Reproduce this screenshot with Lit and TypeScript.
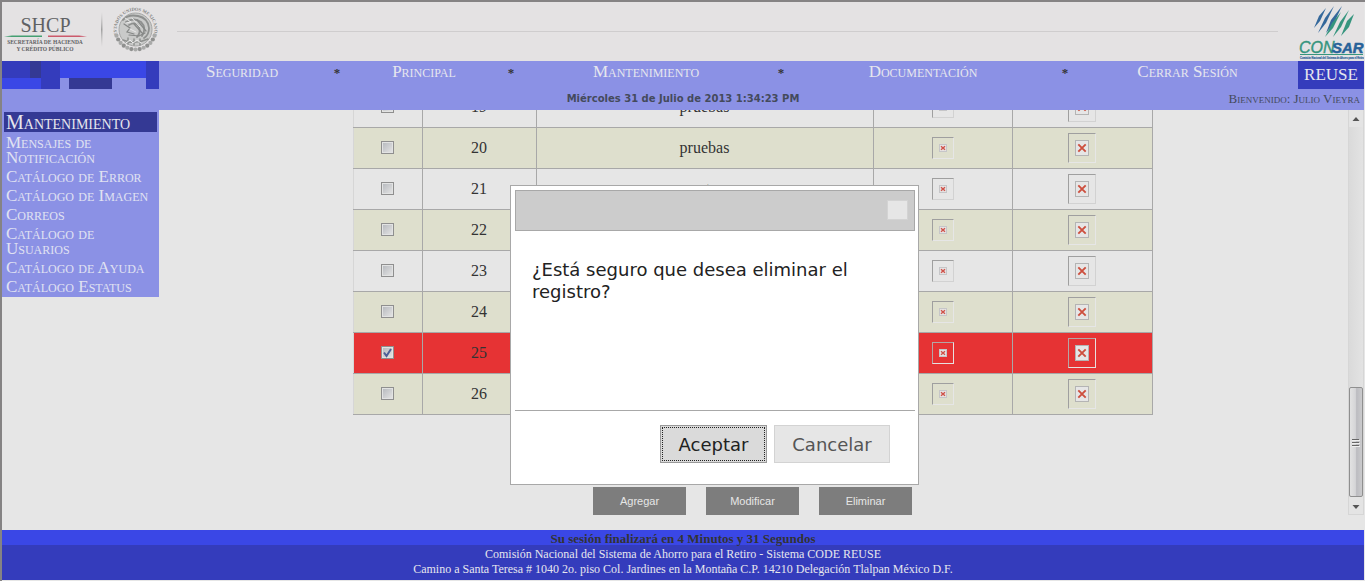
import { LitElement, html, css, svg } from "lit";
import { customElement, state } from "lit/decorators.js";
import { classMap } from "lit/directives/class-map.js";

interface Row {
  id: number;
  name: string;
}

const ROWS: Row[] = [
  { id: 19, name: "pruebas" },
  { id: 20, name: "pruebas" },
  { id: 21, name: "et" },
  { id: 22, name: "pruebas" },
  { id: 23, name: "pruebas" },
  { id: 24, name: "pruebas" },
  { id: 25, name: "pruebas" },
  { id: 26, name: "pruebas" },
];

const NAV = ["Seguridad", "Principal", "Mantenimiento", "Documentación", "Cerrar Sesión"];

const MENU = [
  "Mensajes de Notificación",
  "Catálogo de Error",
  "Catálogo de Imagen",
  "Correos",
  "Catálogo de Usuarios",
  "Catálogo de Ayuda",
  "Catálogo Estatus",
];

@customElement("brand-header")
class BrandHeader extends LitElement {
  static styles = css`
    :host {
      display: flex;
      align-items: flex-start;
      height: 59px;
      background: #e4e2e3;
    }
    svg {
      display: block;
      flex: none;
    }
    .rule {
      flex: 1;
      height: 1px;
      margin: 29px 20px 0 17px;
      background: #cfcdce;
    }
  `;

  private leaves() {
    return Array.from({ length: 13 }, (_, i) => {
      const a = ((i * 12 + 18) * Math.PI) / 180;
      return svg`<circle cx=${135.5 + Math.cos(a) * 20} cy=${29.5 + Math.sin(a) * 20} r="2.1"
        fill=${i % 2 ? "#8f908f" : "#a9aaa9"} />`;
    });
  }

  render() {
    return html`
      <svg width="158" height="59" viewBox="2 2 158 59" role="img" aria-label="SHCP Secretaría de Hacienda y Crédito Público">
        <defs>
          <linearGradient id="bar" x1="0" y1="0" x2="0" y2="1">
            <stop offset="0" stop-color="#b5b5b5" stop-opacity="0" />
            <stop offset=".5" stop-color="#a0a0a0" />
            <stop offset="1" stop-color="#b5b5b5" stop-opacity="0" />
          </linearGradient>
          <path id="arc" d="M117.500 35 A18.800 18.800 0 1 1 153.500 35" />
        </defs>
        <g font-family="'Liberation Serif', serif" text-anchor="middle" fill="#5f6163">
          <text x="45.500" y="32" font-size="20">SHCP</text>
          <text x="45" y="44" font-size="5.500" font-weight="bold">SECRETARÍA DE HACIENDA</text>
          <text x="45" y="50.500" font-size="5.500" font-weight="bold">Y CRÉDITO PÚBLICO</text>
        </g>
        <path d="M4 36.500 L12 35.400 H42 V37 H12 Z" fill="#459f72" />
        <path d="M48 35.400 H79 L87 36.500 L79 37 H48 Z" fill="#cb5a6c" />
        <rect x="101" y="12" width="1.500" height="35" fill="url(#bar)" />
        <circle cx="135.500" cy="29.500" r="16.500" fill="#c9cac9" stroke="#a6a7a6" />
        <text font-family="'Liberation Serif', serif" font-size="4.600" font-weight="bold" fill="#858685">
          <textPath href="#arc">ESTADOS UNIDOS MEXICANOS</textPath>
        </text>
        ${this.leaves()}
        <g fill="none" stroke-linecap="round">
          <path d="M123 20 Q128 14 138 16 Q148 18 149 28 Q149 35 144 38 M126 22 Q134 17 141 22 Q147 28 142 36 M129 25 Q136 21 139 27 Q141 33 137 37" stroke="#8e908f" stroke-width="1.800" />
          <path d="M124 24 L130 28 L127 32 L134 34 M134 24 L143 34 M137 20 L146 31 M129 35 L139 36 L145 33" stroke="#858786" stroke-width="1.200" />
          <path d="M125 18 L131 22 L126 23 M132 18 L140 27 M130 29 L136 32" stroke="#e8e8e8" stroke-width="1" />
          <path d="M123 40 Q135 45 148 39 M128 38 V44 M134 39 V45 M140 39 V45" stroke="#8f918f" stroke-width="1.500" />
          <path d="M126 43 L130 40 L133 43 L137 40 L141 43" stroke="#ececec" stroke-width="1" />
        </g>
      </svg>
      <div class="rule"></div>
      <svg width="66" height="59" viewBox="1298 2 66 59" role="img" aria-label="CONSAR">
        <g fill="#34689b">
          <path d="M1326 8 L1319 16 L1314 28 L1320 21 Z" />
          <path d="M1334 6 L1325 18 L1318 33 L1326 23 Z" />
          <path d="M1342 6 L1331 20 L1326 33 L1334 23 Z" />
        </g>
        <g fill="#36957e">
          <path d="M1341 12 L1332 23 L1325 37 L1333 28 Z" />
          <path d="M1349 10 L1340 22 L1333 37 L1341 27 Z" />
          <path d="M1354 14 L1347 21 L1341 36 L1349 27 Z" />
        </g>
        <g font-family="'Liberation Sans', sans-serif" font-style="italic">
          <text x="1299" y="53" font-size="16" fill="#36957e" stroke="#36957e" stroke-width=".4">CON</text>
          <text x="1332" y="53" font-size="15" font-weight="bold" fill="#286299" stroke="#286299" stroke-width=".5">SAR</text>
        </g>
        <rect x="1300" y="54" width="63" height="1" fill="#36957e" />
        <text x="1300" y="59" font-family="'Liberation Sans', sans-serif" font-size="2.600" fill="#34689b" stroke="#34689b" stroke-width=".2">Comisión Nacional del Sistema de Ahorro para el Retiro</text>
      </svg>
    `;
  }
}

@customElement("main-nav")
class MainNav extends LitElement {
  static styles = css`
    :host {
      display: grid;
      grid-template-columns: 157px 1fr 66px;
      grid-template-rows: 28px 21px;
      background: #8b91e5;
      font-family: "Liberation Serif", serif;
      font-variant: small-caps;
    }
    .mosaic {
      display: block;
    }
    .links {
      display: grid;
      grid-template-columns: 166fr 24px 150fr 24px 246fr 24px 260fr 24px 221fr;
      text-align: center;
      font-size: 17px;
      line-height: 22px;
    }
    .links a {
      color: #e6e6ee;
      text-decoration: none;
    }
    .star {
      color: #333;
      font-size: 13px;
      font-weight: bold;
      line-height: 24px;
    }
    .app {
      background: #343cbc;
      color: #e6e6ee;
      font-size: 17px;
      line-height: 28px;
      text-align: center;
    }
    .info {
      grid-column: 1 / -1;
      display: grid;
      grid-template-columns: 1fr auto 1fr;
      line-height: 20px;
      color: #444a5c;
    }
    .date {
      grid-column: 2;
      font-family: "DejaVu Sans", sans-serif;
      font-variant: normal;
      font-size: 10px;
      font-weight: bold;
    }
    .user {
      font-size: 13px;
      text-align: right;
      padding-right: 4px;
    }
  `;

  render() {
    return html`
      <svg class="mosaic" width="157" height="28" aria-hidden="true">
        <path fill="#343cbc" d="M0 0H58V28H39V17H0Z M144 0H157V28H144Z" />
        <path fill="#343994" d="M28 0H39V17H28Z M67 17H110V28H67Z" />
        <path fill="#3a47e6" d="M58 0H144V17H58Z M0 17H39V28H0Z" />
      </svg>
      <nav class="links">
        ${NAV.map(
          (label, i) => html`${i ? html`<span class="star">*</span>` : ""}<a href="#">${label}</a>`
        )}
      </nav>
      <div class="app">REUSE</div>
      <div class="info">
        <span class="date">Miércoles 31 de Julio de 2013 1:34:23 PM</span>
        <span class="user">Bienvenido: Julio Vieyra</span>
      </div>
    `;
  }
}

@customElement("side-menu")
class SideMenu extends LitElement {
  static styles = css`
    :host {
      display: block;
      background: #8b91e5;
      padding: 2px 2px 1px;
      font-family: "Liberation Serif", serif;
      font-variant: small-caps;
    }
    h2 {
      margin: 0 0 1px;
      padding: 0 2px;
      background: #343994;
      color: #e6e6ee;
      font-size: 20px;
      font-weight: normal;
      line-height: 20px;
    }
    a {
      display: block;
      padding: 2px 30px 2px 2px;
      color: #e0e2f2;
      font-size: 17px;
      line-height: 15px;
      text-decoration: none;
    }
    a.wide {
      padding-right: 0;
    }
  `;

  render() {
    return html`
      <h2>Mantenimiento</h2>
      <nav>
        ${MENU.map(
          (label) =>
            html`<a href="#" class=${classMap({ wide: !/Mensajes|Usuarios/.test(label) })}>${label}</a>`
        )}
      </nav>
    `;
  }
}

@customElement("record-table")
class RecordTable extends LitElement {
  static styles = css`
    :host {
      display: block;
      width: 100%;
      max-width: 800px;
    }
    table {
      width: 100%;
      border-collapse: collapse;
      table-layout: fixed;
      font-size: 16px;
      color: #333;
    }
    td {
      height: 40px;
      padding: 0;
      border: 1px solid #a8a8a8;
      text-align: center;
    }
    td:first-child {
      border-left-color: #d6d6d6;
    }
    .check-col {
      width: 69px;
    }
    .id-col {
      width: 114px;
    }
    .icon-col {
      width: 139px;
    }
    .last-col {
      width: 140px;
    }
    tr.even {
      background: #dedfcd;
    }
    tr.selected {
      background: #e63334;
    }
    input {
      appearance: none;
      display: block;
      width: 13px;
      height: 13px;
      margin: 0;
      border: 1px solid #8f8f8f;
      outline: 1px solid #e2e3e3;
      outline-offset: -2px;
      background: linear-gradient(135deg, #b4b7bc, #e6e6e6);
    }
    .tick {
      display: grid;
      justify-content: center;
      padding-bottom: 2px;
    }
    .tick > * {
      grid-area: 1 / 1;
    }
    .tick svg {
      z-index: 1;
      pointer-events: none;
    }
    .frame {
      display: flex;
      align-items: center;
      justify-content: center;
      box-sizing: border-box;
      margin: 0 auto;
      border: 1px solid;
      border-color: #9f9f9f #d2d2d2 #d2d2d2 #9f9f9f;
    }
    .even .frame {
      border-color: #9f9f9f #e6e6e6 #e6e6e6 #9f9f9f;
    }
    .selected .frame {
      border-color: #b5a5a5 #e8e0e0 #e8e0e0 #b5a5a5;
    }
    .small {
      width: 22px;
      height: 22px;
    }
    .large {
      width: 28px;
      height: 30px;
    }
  `;

  @state() private selected = 25;

  private row(r: Row) {
    const checked = r.id === this.selected;
    return html`
      <tr class=${classMap({ even: r.id % 2 === 0, selected: checked })}>
        <td>
          <label class="tick">
            <input
              type="checkbox"
              aria-label="Seleccionar ${r.id}"
              .checked=${checked}
              @change=${() => (this.selected = checked ? 0 : r.id)}
            />
            ${checked
              ? html`<svg width="13" height="13" aria-hidden="true">
                  <path d="M3 6.500 L5.500 10 L10 3" fill="none" stroke="#4c5f97" stroke-width="2" />
                </svg>`
              : ""}
          </label>
        </td>
        <td>${r.id}</td>
        <td>${r.name}</td>
        <td>
          <div class="frame small">
            <svg width="8" height="8" aria-hidden="true">
              <rect x=".5" y=".5" width="7" height="7" fill="#e6e3e3" stroke="#c6c6c8" />
              <path d="M2 2.300 L6 5.700 M6 2.300 L2 5.700" stroke="#cf5148" stroke-width="1.400" />
            </svg>
          </div>
        </td>
        <td>
          <div class="frame large">
            <svg width="14" height="16" aria-hidden="true">
              <rect x=".5" y=".5" width="13" height="15" fill="#e6e6e6" stroke="#b4b4b4" />
              <path d="M3.300 4.300 L10.700 11.700 M10.700 4.300 L3.300 11.700" stroke="#cd4f3e" stroke-width="1.900" />
            </svg>
          </div>
        </td>
      </tr>
    `;
  }

  render() {
    return html`
      <table>
        <colgroup>
          <col class="check-col" />
          <col class="id-col" />
          <col />
          <col class="icon-col" />
          <col class="last-col" />
        </colgroup>
        <tbody>
          ${ROWS.map((r) => this.row(r))}
        </tbody>
      </table>
    `;
  }
}

@customElement("scroll-track")
class ScrollTrack extends LitElement {
  static styles = css`
    :host {
      display: flex;
      flex-direction: column;
      box-sizing: border-box;
      width: 16px;
      border: 1px solid #d6d6d6;
      border-width: 0 1px 1px;
      background: linear-gradient(90deg, #dadada, #e3e3e3);
    }
    svg {
      display: block;
    }
    .space {
      flex: 1;
    }
    .thumb {
      display: flex;
      align-items: center;
      justify-content: center;
      box-sizing: border-box;
      height: 110px;
      border: 1px solid #8f8f8f;
      border-radius: 2px;
      background: linear-gradient(90deg, #e2e2e2, #d5d5d7 45%, #bcbcc0 55%, #cbcbcd);
    }
    .cap {
      background: #e4e4e4;
    }
  `;

  render() {
    return html`
      <svg class="cap" width="14" height="17" aria-hidden="true"><path d="M3.500 11 L7 7 L10.500 11Z" fill="#555" /></svg>
      <div class="space"></div>
      <div class="thumb">
        <svg width="8" height="9" aria-hidden="true">
          <path d="M0 1.500H7M0 4.500H7M0 7.500H7" stroke="#666" />
          <path d="M0 2.500H8M0 5.500H8M0 8.500H8" stroke="#eee" />
        </svg>
      </div>
      <svg class="cap" width="14" height="17" aria-hidden="true"><path d="M3.500 8 H10.500 L7 12Z" fill="#555" /></svg>
    `;
  }
}

@customElement("confirm-dialog")
class ConfirmDialog extends LitElement {
  static styles = css`
    :host {
      display: flex;
      flex-direction: column;
      box-sizing: border-box;
      width: 409px;
      height: 300px;
      padding: 4px 3px 21px 4px;
      border: 1px solid #a8a8a8;
      background: #fff;
      font-family: "DejaVu Sans", sans-serif;
      font-size: 18px;
      line-height: 22px;
      color: #222;
    }
    header {
      display: flex;
      align-items: flex-start;
      justify-content: flex-end;
      box-sizing: border-box;
      height: 41px;
      padding: 9px 6px 0;
      border: 1px solid #a8a8a8;
      background: #ccc;
    }
    button {
      box-sizing: border-box;
      padding: 0;
      border: 1px solid #d3d3d3;
      background: #e6e6e6;
      color: #555;
      font: inherit;
    }
    .close {
      width: 21px;
      height: 20px;
    }
    p {
      flex: 1;
      margin: 0;
      padding: 28px 17px;
    }
    footer {
      display: flex;
      justify-content: flex-end;
      gap: 7px;
      padding: 14px 25px 0 0;
      border-top: 1px solid #a8a8a8;
    }
    footer button {
      width: 116px;
      height: 38px;
      padding-top: 2px;
    }
    footer .accept {
      width: 107px;
      border-color: #999;
      background: #dadada;
      color: #212121;
      outline: 1px dotted #222;
      outline-offset: -3px;
    }
  `;

  render() {
    return html`
      <header><button class="close" aria-label="Cerrar"></button></header>
      <p>¿Está seguro que desea eliminar el registro?</p>
      <footer>
        <button class="accept">Aceptar</button>
        <button>Cancelar</button>
      </footer>
    `;
  }
}

@customElement("app-root")
class AppRoot extends LitElement {
  static styles = css`
    :host {
      display: flex;
      flex-direction: column;
      box-sizing: border-box;
      height: 100vh;
      padding-bottom: 1px;
      border: solid #858384;
      border-width: 2px 0 0 2px;
      background: #e6e6e6;
      font-family: "Liberation Serif", serif;
      overflow: hidden;
    }
    .page {
      display: flex;
      flex-direction: column;
      flex: 1;
      min-height: 0;
      margin-right: 1px;
    }
    .body {
      display: grid;
      grid-template-columns: 157px 1fr 16px;
      flex: 1;
      min-height: 0;
      margin-bottom: 15px;
    }
    .side {
      align-self: start;
    }
    .content {
      display: flex;
      flex-direction: column;
      justify-content: flex-end;
      align-items: center;
      min-height: 0;
      padding-right: 2px;
      overflow: hidden;
    }
    .actions {
      display: flex;
      gap: 20px;
      margin-top: 72px;
    }
    .actions button {
      width: 93px;
      height: 28px;
      padding: 0;
      border: 0;
      background: #7d7d7d;
      color: #e6e6e6;
      font: 11px "Liberation Sans", sans-serif;
    }
    .foot {
      background: #343cbc;
      color: #e6e6ee;
      text-align: center;
      font-size: 12px;
      line-height: 15px;
      padding-bottom: 3px;
    }
    .session {
      margin-bottom: 1px;
      padding-top: 1px;
      background: linear-gradient(#3a47e6 15px, #343cbc 15px);
      color: #333;
      font-size: 13px;
      font-weight: bold;
    }
    .dialog {
      position: absolute;
      left: 510px;
      top: 185px;
    }
  `;

  render() {
    return html`
      <div class="page">
        <brand-header></brand-header>
        <main-nav></main-nav>
        <div class="body">
          <side-menu class="side"></side-menu>
          <main class="content">
            <record-table></record-table>
            <div class="actions">
              <button>Agregar</button>
              <button>Modificar</button>
              <button>Eliminar</button>
            </div>
          </main>
          <scroll-track></scroll-track>
        </div>
        <div class="foot">
          <div class="session">Su sesión finalizará en 4 Minutos y 31 Segundos</div>
          <div>Comisión Nacional del Sistema de Ahorro para el Retiro - Sistema CODE REUSE</div>
          <div>Camino a Santa Teresa # 1040 2o. piso Col. Jardines en la Montaña C.P. 14210 Delegación Tlalpan México D.F.</div>
        </div>
      </div>
      <confirm-dialog class="dialog" role="dialog" aria-modal="true" aria-label="Confirmación"></confirm-dialog>
    `;
  }
}
